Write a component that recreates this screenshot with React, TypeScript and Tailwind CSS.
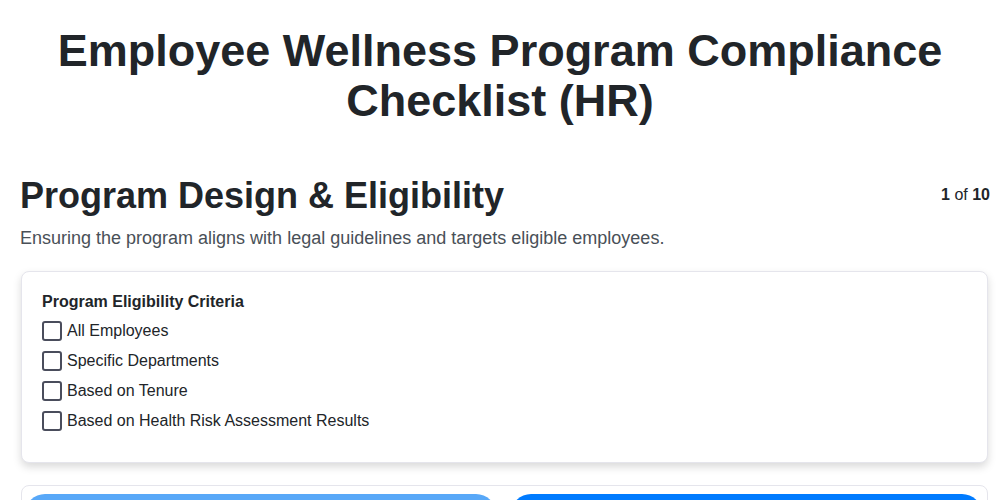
import React from "react";

const items = [
  "All Employees",
  "Specific Departments",
  "Based on Tenure",
  "Based on Health Risk Assessment Results",
];

export default function App() {
  return (
    <div className="min-h-screen bg-white text-[#212529] pl-5 pr-[10px] pt-[26px]" style={{ fontFamily: '"Liberation Sans", Arial, sans-serif' }}>
      <h1 className="text-center font-bold text-[45px] leading-[50px] pr-[10px]">
        Employee Wellness Program Compliance Checklist (HR)
      </h1>
      <div className="mt-[48px] flex items-start justify-between">
        <h2 className="font-bold text-[36px] leading-[44px]">Program Design &amp; Eligibility</h2>
        <div className="text-[16px] mt-[9px]">
          <span className="font-bold">1</span> of <span className="font-bold">10</span>
        </div>
      </div>
      <p className="mt-[7px] text-[18px] leading-[26px] text-[#495057]">
        Ensuring the program aligns with legal guidelines and targets eligible employees.
      </p>
      <div className="mt-[20px] ml-px mr-[2px] rounded-lg border border-[#e5e5ec] bg-white px-5 pt-[20px] pb-[31px] shadow-[0_4px_8px_rgba(0,0,0,0.15)]">
        <div className="font-bold text-[16px] leading-5">Program Eligibility Criteria</div>
        <div className="mt-[9px] flex flex-col gap-[10px]">
          {items.map((t) => (
            <label key={t} className="flex items-center gap-[5px] text-[16px] leading-5">
              <span className="w-5 h-5 rounded-[3px] border-2 border-[#4a4d5c] bg-white" />
              {t}
            </label>
          ))}
        </div>
      </div>
      <div className="mt-[22px] ml-px mr-[2px] rounded-lg border border-[#e5e5ec] bg-white pl-[3px] pr-[5px] pt-[8px] flex gap-[15px]">
        <div className="flex-1 h-10 rounded-t-[20px] bg-[#58a8f8]" />
        <div className="flex-1 h-10 rounded-t-[20px] bg-[#007bff]" />
      </div>
    </div>
  );
}
